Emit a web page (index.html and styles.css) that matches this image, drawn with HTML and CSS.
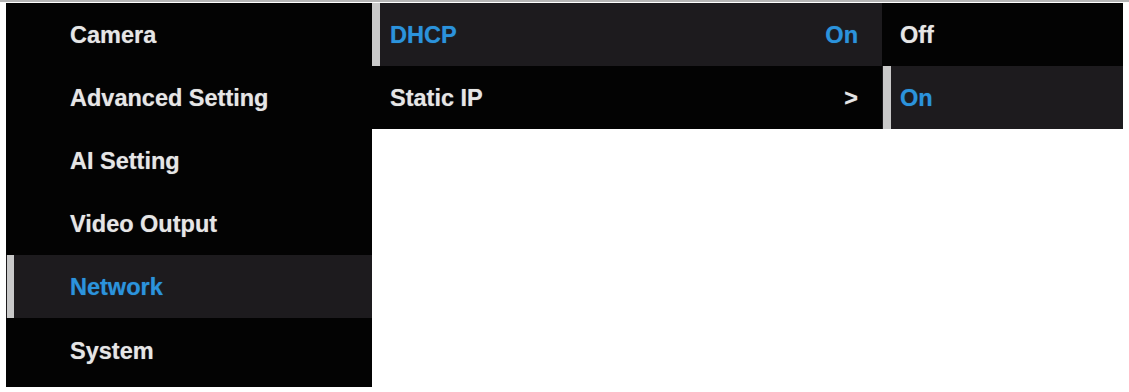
FILE: index.html
```html
<!DOCTYPE html>
<html>
<head>
<meta charset="utf-8">
<link rel="stylesheet" href="styles.css">
</head>
<body>
<div class="osd">
  <ul class="menu main">
    <li class="item">Camera</li>
    <li class="item">Advanced Setting</li>
    <li class="item">AI Setting</li>
    <li class="item">Video Output</li>
    <li class="item active">Network</li>
    <li class="item">System</li>
  </ul>
  <ul class="menu sub">
    <li class="item active"><span>DHCP</span><span class="val">On</span></li>
    <li class="item"><span>Static IP</span><span class="val">&gt;</span></li>
  </ul>
  <ul class="menu opts">
    <li class="item">Off</li>
    <li class="item active">On</li>
  </ul>
</div>
</body>
</html>
```
FILE: styles.css
```css
html, body {
  margin: 0;
  padding: 0;
  background: #ffffff;
}
body {
  width: 1129px;
  height: 392px;
  overflow: hidden;
  font-family: "Liberation Sans", Arial, sans-serif;
  font-weight: bold;
  font-size: 23.5px;
  color: #e6e6e6;
}
.osd {
  display: flex;
  align-items: flex-start;
  padding: 3px 0 0 6px;
  box-shadow: inset 0 2px 0 #b5b5b5;
}
.menu {
  list-style: none;
  margin: 0;
  padding: 0;
  background: #030303;
}
.item {
  position: relative;
  display: flex;
  align-items: center;
  justify-content: space-between;
  box-sizing: border-box;
  padding-top: 2px;
  text-shadow: 0 0 1px rgba(230,230,230,0.5);
}
.item.active {
  background: #1d1b1e;
  color: #2b93dc;
  text-shadow: 0 0 1px rgba(43,147,220,0.6);
}
.item.active::before {
  content: "";
  position: absolute;
  left: 0;
  top: 0;
  bottom: 0;
  width: 8px;
  background: #c9c9c9;
}
.main {
  width: 366px;
}
.main .item {
  height: 63px;
  padding-left: 64px;
}
.main .item:last-child {
  height: 69px;
  padding-bottom: 4px;
}
.main .item.active::before {
  left: 1px;
  width: 7px;
}
.sub {
  width: 510px;
}
.sub .item {
  height: 63px;
  padding-left: 18px;
  padding-right: 24px;
}
.sub .val {
  color: #e6e6e6;
}
.sub .item.active .val {
  color: #2b93dc;
}
.opts {
  width: 241px;
}
.opts .item {
  height: 63px;
  padding-left: 18px;
}
.opts .item.active::before {
  left: 1px;
}
```
